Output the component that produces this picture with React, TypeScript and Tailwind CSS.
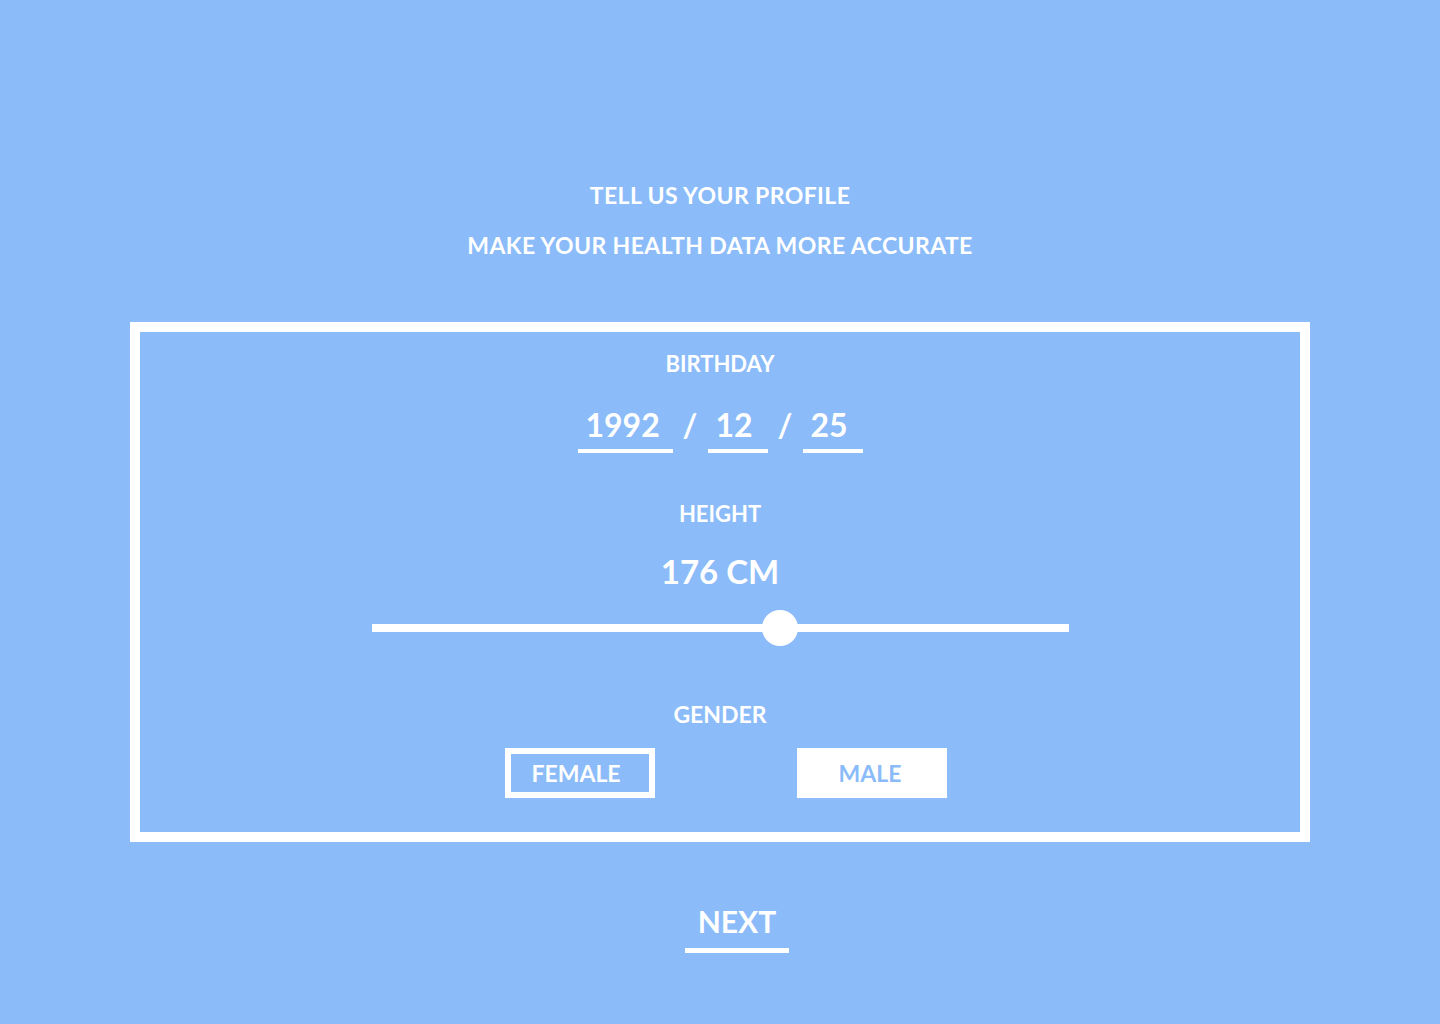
export default function App() {
  const font = { fontFamily: 'Lato, "Noto Sans", sans-serif' };
  return (
    <div className="min-h-screen w-full bg-[#8bbbf9] text-white flex flex-col items-center pt-[180px] font-bold" style={font}>
      {/* 헤더 */}
      <h1 className="text-[23px] leading-[30px] tracking-[0.4px]">TELL US YOUR PROFILE</h1>
      <p className="mt-[20px] text-[23px] leading-[30px] tracking-[0.4px]">MAKE YOUR HEALTH DATA MORE ACCURATE</p>

      {/* 프로필 카드 */}
      <div className="mt-[62px] w-[1180px] h-[520px] border-[10px] border-white flex flex-col items-center pt-[17px]">
        <div className="text-[22px] leading-[30px]">BIRTHDAY</div>
        <div className="mt-[26px] flex items-start">
          <div className="w-[95px] border-b-4 border-white pb-[4px] pl-2 text-[32px] leading-[40px]">1992</div>
          <div className="w-[35px] text-center text-[32px] leading-[40px]">/</div>
          <div className="w-[60px] border-b-4 border-white pb-[4px] pl-2 text-[32px] leading-[40px]">12</div>
          <div className="w-[35px] text-center text-[32px] leading-[40px]">/</div>
          <div className="w-[60px] border-b-4 border-white pb-[4px] pl-2 text-[32px] leading-[40px]">25</div>
        </div>

        <div className="mt-[46px] text-[22px] leading-[30px]">HEIGHT</div>
        <div className="mt-[20px] text-[33px] leading-[44px]">176 CM</div>
        <div className="mt-[17px] relative w-[697px] h-[36px] flex items-center">
          <div className="w-full h-[8px] bg-white" />
          <div className="absolute left-[390px] top-0 w-[36px] h-[36px] rounded-full bg-white" />
        </div>

        <div className="mt-[53px] text-[23px] leading-[30px]">GENDER</div>
        <div className="mt-[19px] ml-[12px] flex gap-[142px]">
          <button className="w-[150px] h-[50px] border-[6px] border-white pr-[8px] text-white text-[23px] font-bold leading-none">FEMALE</button>
          <button className="w-[150px] h-[50px] bg-white pr-[4px] text-[#8bbbf9] text-[23px] font-bold leading-none">MALE</button>
        </div>
      </div>

      {/* 다음 버튼 */}
      <button className="mt-[61px] ml-[34px] w-[104px] border-b-[5px] border-white pb-[9px] text-[30px] leading-[36px] font-bold text-white">
        NEXT
      </button>
    </div>
  );
}
